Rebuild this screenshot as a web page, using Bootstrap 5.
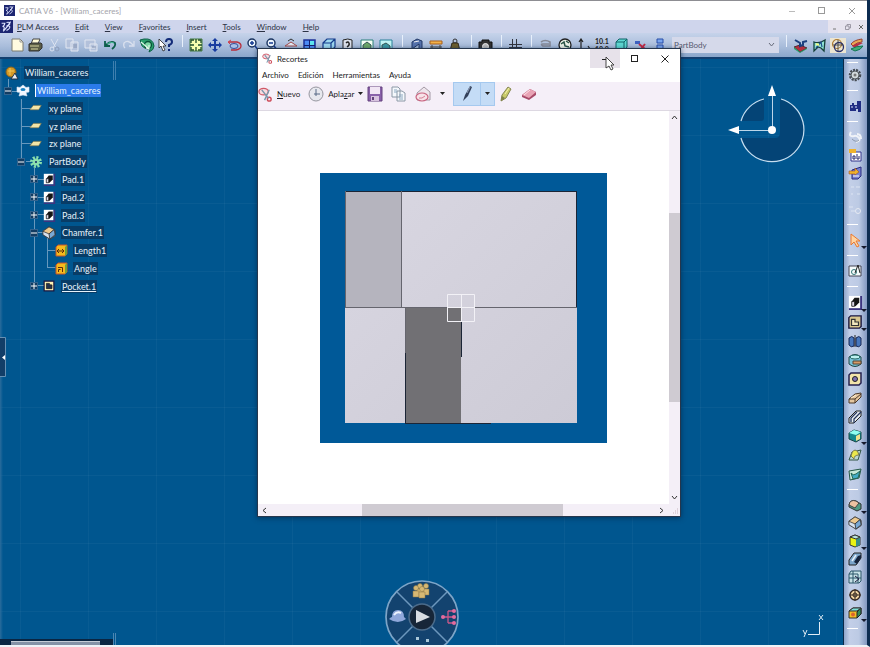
<!DOCTYPE html>
<html lang="en">
<head>
<meta charset="utf-8">
<meta name="viewport" content="width=device-width, initial-scale=1">
<title>CATIA V6 - [William_caceres]</title>
<link href="https://cdn.jsdelivr.net/npm/bootstrap@5.3.0/dist/css/bootstrap.min.css" rel="stylesheet">
<style>
body{font:8px/12px Lato,"Open Sans",sans-serif;color:#2c3345;background:#fff;height:100vh;overflow:hidden}
svg{display:block;flex:none}
button{background:none;border:0;padding:0;color:inherit;font:inherit}
button:hover{background:#ffffff55}
.app{height:100vh;border-right:3px solid #0d2c50;border-bottom:2px solid #eef3f8}
.titlebar{height:20px;border-top:1px solid #8d8d92;background:#fff;color:#a3a3aa}
.titlebar .sys{width:30px}
.menus{height:13px;background:#cfd5ec}
.menus a,.snip-menu a{color:inherit;text-decoration:none}
.menus nav{gap:16px}
.mdi{width:39px;background:#e6e3ee}
.tools{height:26px;background:linear-gradient(#c6d3ea,#a9bddb 55%,#8aa6cb);border-bottom:2px solid #123f70}
.tools button{flex:1 1 0;height:20px;display:flex;align-items:center;justify-content:center}
.g9{width:167px}.g11{width:208px}.g3{width:57px}.g1{width:18px}.g7{width:133px}.g4{width:75px}
.split{width:12px;height:12px;border-left:1px solid #e8f0fb;margin-left:7px;margin-right:-7px;align-self:flex-start;margin-top:2px}
.body-pick{width:107px;height:16px;margin-left:3px;border:0;border-radius:0;background:#d5d9ea;color:#555a70;font-size:8px;line-height:16px;padding:0 0 0 2px;appearance:none}
.pick{position:relative}
.pick svg{position:absolute;right:4px;top:5px;pointer-events:none}
.view{position:relative;overflow:hidden;background-color:#00568f;background-image:linear-gradient(90deg,#2a6c9c 0,#00568f00 3px),repeating-linear-gradient(90deg,#ffffff00 0 20px,#ffffff09 20px 21px,#ffffff00 21px 68px),repeating-linear-gradient(#ffffff00 0 8px,#ffffff09 8px 9px,#ffffff00 9px 68px)}
.tree{height:231px;width:115px;margin-top:5px;position:relative;font-size:9px;color:#e6f2fb}
.tree li{flex:1 1 0;display:flex;align-items:center;position:relative}
.tree .tag{background:#083c66;padding:0 1px;height:13px;line-height:13px;margin-left:-1px}
.tree .picked{background:#2b7bea;border-left:1px solid #fff}
.tree .exp{width:8px;height:8px;background:#123c62;border:1px solid #32638e;margin-right:4px;display:grid;place-items:center}
.tree .pic{width:14px;margin-right:6px;display:grid;place-items:center}
.l0{padding-left:5px}.l1{padding-left:4px}.l2{padding-left:17px}.l3{padding-left:30px}.l4{padding-left:42px}
.noexp{margin-left:12px}
.corner{position:absolute}
.compass{right:36px;top:24px}
.wheel{left:50%;bottom:0;margin-left:-38px}
.axes{right:19px;bottom:7px}
.flap{left:0;top:278px}
.dock{left:0;bottom:0}
.rule-top{left:113px;top:2px;width:3px;height:19px;border:1px solid #3f7fae;border-width:0 1px}
.side{width:24px;background:linear-gradient(90deg,#8ea5ca,#c3cfe8 25%,#bccae4 65%,#8298c0);border-left:1px solid #0b2948}
.side button{height:18px;width:24px;padding-right:2px;display:flex;align-items:center;justify-content:center;flex:none;position:relative}
.side .tall button{height:19px}
.side hr{margin:6px 0 6px 3px;width:11px;border:0;height:1px;background:#fff;opacity:1;flex:none}
.side hr.first{margin:3px 0 3px 3px}
.side .more::after{content:"";position:absolute;right:1px;bottom:0;border:3px solid transparent;border-top-color:#15192c;border-bottom:0}
.snip{position:absolute;left:257px;top:48px;width:424px;height:469px;background:#fff;border:1px solid #26364c;box-shadow:0 1px 5px #001c3899;color:#1b1b24}
.snip-title{height:19px;flex:none}
.snip-title button{width:30px;display:grid;place-items:center}
.snip-title .hot{background:#e7e2ea}
.snip-menu{height:14px;gap:9px;flex:none}
.snip-tools{height:29px;padding-bottom:4px;background:#f5eff8;border-bottom:1px solid #ddd8e2;flex:none}
.snip-tools button{height:24px;display:flex;align-items:center}
.pen{background:#c4dcf6;border:1px solid #a5c9ef}
.pen span{border-left:1px solid #a5c9ef}
.bar{background:#f4eff7}
.vbar{width:11px}.hbar{height:12px}
.thumb{background:#cfcbd2}
.vbar .thumb{height:189px;margin-top:89px}
.hbar .thumb{width:201px;margin-left:95px}
.pointer{position:absolute;left:605px;top:56px}
</style>
<script src="https://cdn.jsdelivr.net/npm/bootstrap@5.3.0/dist/js/bootstrap.bundle.min.js"></script>
</head>
<body>
<svg width="0" height="0" class="position-absolute" aria-hidden="true">
<symbol id="logo" viewBox="0 0 16 16"><rect width="16" height="16" fill="#1d2671"/><path d="M2 4h4q-1 4-3 4 4 0 1 5M8 3q5-1 4 2l-3 2q5 0 2 4l-3 2M4 14q5-5 9-12" fill="none" stroke="#dfe5ff" stroke-width="1.300"/></symbol>
<symbol id="pad" viewBox="0 0 16 16"><path d="M1 1h12v13H1z" fill="#fff"/><path d="M14 1v14H1" fill="none" stroke="#3d347f" stroke-width="2"/><path d="M4 7l3-4h5v5l-4 4H4z" fill="#151515"/><path d="M4 7h3v5H4z" fill="#ded9e8" stroke="#151515" stroke-width=".8"/></symbol>
<symbol id="pocket" viewBox="0 0 16 16"><path d="M1.500 1.500h13v13h-13z" fill="#fff3b5" stroke="#191640" stroke-width="1.600"/><path d="M4.500 4.500h4l1 2h2.500v5h-7.500z" fill="#24324d" stroke="#222"/></symbol>
<symbol id="pocket2" viewBox="0 0 16 16"><path d="M1 3l2-2h12v12l-2 2H1z" fill="#d9c890" stroke="#191640" stroke-width="1.600"/><path d="M4 5h4v3h4v4H4z" fill="#f2e8bd" stroke="#333" stroke-width="1.400"/></symbol>
<symbol id="chamfer" viewBox="0 0 16 16"><path d="M1 6l7-5 7 4v6l-6 4-8-5z" fill="#d5e1ee" stroke="#333"/><path d="M1 6l7-5 6 3-6 5z" fill="#edc98d" stroke="#444"/><path d="M8 9l6-5 1 6-6 5z" fill="#79a9d5" stroke="#333"/></symbol>
<symbol id="scissors" viewBox="0 0 16 16"><ellipse cx="6" cy="5" rx="5" ry="3.500" fill="#f7dbe0" stroke="#d05766" stroke-width="1.300"/><circle cx="12" cy="13" r="2" fill="none" stroke="#ce4c5a" stroke-width="1.500"/><path d="M4 3l7 9M12 3L7 14" stroke="#7896ab" stroke-width="1.500"/></symbol>
<symbol id="plane" viewBox="0 0 16 16"><path d="M5 5h9l-3 5H1z" fill="#f3e5a7" stroke="#8a7a46" stroke-width=".7"/></symbol>
</svg>
<div class="app d-flex flex-column">
<header class="titlebar d-flex align-items-center flex-shrink-0">
 <svg class="ms-1 me-1" width="11" height="11"><use href="#logo"/></svg><span class="ps-0">CATIA V6 - [William_caceres]</span>
 <div class="ms-auto d-flex">
 <button class="sys" aria-label="Minimize"><svg class="mx-auto" width="8" height="8"><path d="M1 4.500h6" stroke="#bbb"/></svg></button>
 <button class="sys" aria-label="Maximize"><svg class="mx-auto" width="8" height="8"><rect x=".5" y=".5" width="6" height="6" fill="none" stroke="#999"/></svg></button>
 <button class="sys" aria-label="Close"><svg class="mx-auto" width="8" height="8"><path d="M1 1l6 6M7 1l-6 6" stroke="#999"/></svg></button></div>
</header>
<div class="menus d-flex align-items-stretch flex-shrink-0">
 <svg width="13" height="13"><use href="#logo"/></svg>
 <nav class="d-flex align-items-center ms-1" aria-label="Main menu"><a href="#"><u>P</u>LM Access</a><a href="#"><u>E</u>dit</a><a href="#"><u>V</u>iew</a><a href="#"><u>F</u>avorites</a><a href="#"><u>I</u>nsert</a><a href="#"><u>T</u>ools</a><a href="#"><u>W</u>indow</a><a href="#"><u>H</u>elp</a></nav>
 <div class="mdi ms-auto d-flex align-items-center justify-content-around">
 <button aria-label="Minimize document"><svg width="6" height="6"><path d="M1 5h3" stroke="#777"/></svg></button><button aria-label="Restore document"><svg width="6" height="6"><path d="M2 2V.5h3.500V4H4M.5 2h3.500v3.500H.5z" fill="none" stroke="#8b8995" stroke-width=".8"/></svg></button><button aria-label="Close document"><svg width="6" height="6"><path d="M1 1l4 4M5 1L1 5" stroke="#666"/></svg></button></div>
</div>
<div class="tools d-flex align-items-center flex-shrink-0 ps-2" role="toolbar" aria-label="Standard">
 <div class="g9 d-flex">
 <button aria-label="New"><svg width="13" height="14" viewBox="0 0 13 14"><path d="M1 1h8l3 3v9H1z" fill="#fffbe0" stroke="#7b7b70"/><path d="M9 1v3h3" fill="none" stroke="#999"/></svg></button>
 <button aria-label="Print"><svg width="15" height="14" viewBox="0 0 15 14"><path d="M5 1h7l-2 5H3z" fill="#fffbd8" stroke="#444"/><path d="M1 6l3-1h9l1 1v4l-3 3H1z" fill="#5b5d46" stroke="#333"/><path d="M2 8h9M3 11h7" stroke="#d8d6a0"/></svg></button>
 <button aria-label="Cut"><svg width="13" height="14" viewBox="0 0 13 14"><path d="M3 1l5 9M10 1L5 10" stroke="#dce3f0"/><circle cx="4" cy="11" r="2" fill="none" stroke="#dce3f0"/><circle cx="9" cy="11" r="2" fill="none" stroke="#8a9ab8"/></svg></button>
 <button aria-label="Copy"><svg width="15" height="14" viewBox="0 0 15 14"><path d="M1 1h7v9H1zM6 4h7v9H6z" fill="#b3c1db" stroke="#e2e7f1"/><path d="M8 7h4M8 9h4" stroke="#8292b0"/></svg></button>
 <button aria-label="Paste"><svg width="15" height="14" viewBox="0 0 15 14"><path d="M1 2h10v8H1zM6 6h7v7H6z" fill="#b3c1db" stroke="#e2e7f1"/><path d="M8 9h4" stroke="#8292b0"/></svg></button>
 <button aria-label="Undo"><svg width="15" height="14" viewBox="0 0 15 14"><path d="M2 3v5h5M3 7q5-5 9-2 1 3-3 6" fill="none" stroke="#0d5f4a" stroke-width="1.800"/><path d="M4 6q4-3 7-1" fill="none" stroke="#59d4ab" stroke-width=".8"/></svg></button>
 <button aria-label="Redo"><svg width="15" height="14" viewBox="0 0 15 14"><path d="M13 3v5H8M12 7Q7 1 3 5 2 8 4 10" fill="none" stroke="#d9e0ee" stroke-width="1.300"/></svg></button>
 <button aria-label="Update"><svg width="16" height="15" viewBox="0 0 16 15"><path d="M1 2l4-1q9-1 10 7 0 4-5 6l1-3q-8 0-9-6z" fill="#2aa06c" stroke="#0b5f46"/><circle cx="9" cy="7" r="3.500" fill="#7fd8a6" stroke="#075339" stroke-width="1.300"/><path d="M2 4l8 7M7 10l3 1V7" fill="none" stroke="#e2fae8" stroke-width="1.100"/></svg></button>
 <button aria-label="What's this"><svg width="15" height="14" viewBox="0 0 15 14"><path d="M1 1v9l2-2 2 5 2-1-2-4h3z" fill="#fff" stroke="#222" stroke-width=".8"/><path d="M8 4q0-3 3-3t3 3q0 2-3 3v2M11 11v2" fill="none" stroke="#122b78" stroke-width="2"/></svg></button>
 </div><i class="split"></i>
 <div class="g11 d-flex">
 <button aria-label="Fit all"><svg width="14" height="14" viewBox="0 0 14 14"><path d="M1 1h12v12H1z" fill="#f5ffb0" stroke="#427b46"/><path d="M2 5V2h3M9 2h3v3M2 9v3h3M9 12h3V9M7 1v4M7 9v4M1 7h4M9 7h4" fill="none" stroke="#1c4e2b" stroke-width="1.300"/></svg></button>
 <button aria-label="Pan"><svg width="14" height="14" viewBox="0 0 14 14"><path d="M7 0l3 3H8v3h3V4l3 3-3 3V8H8v3h2l-3 3-3-3h2V8H3v2L0 7l3-3v2h3V3H4z" fill="#173ba0"/></svg></button>
 <button aria-label="Rotate"><svg width="15" height="14" viewBox="0 0 15 14"><path d="M2 4h8q4 1 4 4t-5 4H4" fill="none" stroke="#b82e3b" stroke-width="1.300"/><path d="M4 2L1 4l3 3" fill="none" stroke="#d2404b"/><ellipse cx="7" cy="8" rx="4" ry="2.500" fill="#a9c0e8" stroke="#364e9a"/></svg></button>
 <button aria-label="Zoom in"><svg width="14" height="14" viewBox="0 0 14 14"><circle cx="6" cy="5" r="4" fill="#eef7ff" stroke="#19335f" stroke-width="1.400"/><path d="M4 5h4M6 3v4M9 8l4 5" stroke="#163b91" stroke-width="1.500"/></svg></button>
 <button aria-label="Zoom out"><svg width="14" height="14" viewBox="0 0 14 14"><circle cx="6" cy="5" r="4" fill="#eef7ff" stroke="#19335f" stroke-width="1.400"/><path d="M4 5h4M9 8l4 5" stroke="#163b91" stroke-width="1.500"/></svg></button>
 <button aria-label="Normal view"><svg width="14" height="14" viewBox="0 0 14 14"><path d="M1 8l6-4 6 4z" fill="#e2ecf7" stroke="#a34d4d"/><path d="M4 3l3-2 3 2" fill="none" stroke="#333"/></svg></button>
 <button aria-label="Multi-view"><svg width="13" height="13" viewBox="0 0 13 13"><path d="M1 1h11v11H1z" fill="#4d8cf5" stroke="#1d3198" stroke-width="1.500"/><path d="M7 2h4v4H7z" fill="#5ee7ef"/><path d="M6.500 1v11M1 6.500h11" stroke="#162070"/></svg></button>
 <button aria-label="Isometric view"><svg width="14" height="14" viewBox="0 0 14 14"><path d="M1 5l4-4h8v8l-4 4H1zM1 5h8v8M9 5l4-4" fill="#9dd8ef" stroke="#153b8b" stroke-width="1.200"/></svg></button>
 <button aria-label="View mode"><svg width="12" height="14" viewBox="0 0 12 14"><path d="M1 2q5-2 9 0v11H1z" fill="#dce1ec" stroke="#222"/><path d="M4 5q2-2 3 0t-2 4" fill="none" stroke="#222" stroke-width="1.400"/></svg></button>
 <button aria-label="Hide or show"><svg width="14" height="13" viewBox="0 0 14 13"><path d="M1 1h12v11H1z" fill="#f5fff5" stroke="#2b8179"/><path d="M3 6l4-3 4 3v4H3z" fill="#6ca868" stroke="#355"/></svg></button>
 <button aria-label="Swap space"><svg width="14" height="13" viewBox="0 0 14 13"><path d="M1 1h12v11H1z" fill="#bff4f4" stroke="#2b8199"/><path d="M3 6l4-2 4 3v4H3z" fill="#3c9aa5" stroke="#355"/></svg></button>
 </div><i class="split"></i>
 <div class="g3 d-flex">
 <button aria-label="Catalog"><svg width="14" height="14" viewBox="0 0 14 14"><path d="M2 4l5-3 5 2v8H9V6l-7 5z" fill="#5572ac" stroke="#223866"/><path d="M4 4l5-1" stroke="#eee"/></svg></button>
 <button aria-label="Measure"><svg width="14" height="14" viewBox="0 0 14 14"><path d="M1 3h12v3H1z" fill="#f4b34b" stroke="#a7611e"/><path d="M1 9h12M3 7v4M11 7v4" stroke="#444"/></svg></button>
 <button aria-label="Inertia"><svg width="12" height="14" viewBox="0 0 12 14"><circle cx="6" cy="3" r="2" fill="none" stroke="#333"/><path d="M3 5h6l2 8H1z" fill="#6e602f" stroke="#302b20"/></svg></button>
 </div><i class="split"></i><div class="g1 d-flex"><button aria-label="Capture"><svg width="15" height="13" viewBox="0 0 15 13"><path d="M1 3h3V1h7v2h3v9H1z" fill="#333" stroke="#111"/><circle cx="7.500" cy="7.500" r="3" fill="#bbb" stroke="#eee"/></svg></button></div>
 <i class="split"></i><div class="g1 d-flex"><button aria-label="Work grid"><svg width="14" height="14" viewBox="0 0 14 14"><path d="M4.500 1v12M8.500 1v12M1 6.500h13M1 9.500h13" stroke="#33363f"/></svg></button></div><i class="split"></i>
 <div class="g7 d-flex">
 <button aria-label="Link"><svg width="13" height="14" viewBox="0 0 13 14"><path d="M2 4q4-3 9 0v4H4q-3-2 0-2h6" fill="none" stroke="#858997" stroke-width="1.600"/></svg></button>
 <button aria-label="Clock"><svg width="14" height="14" viewBox="0 0 14 14"><circle cx="7" cy="7" r="6" fill="#edf3e9" stroke="#222" stroke-width="1.300"/><path d="M3 6l3-2 1 4 4 1M8 3l3 2" stroke="#285246" stroke-width="1.500" fill="none"/></svg></button>
 <button aria-label="Axis system"><svg width="14" height="14" viewBox="0 0 14 14"><path d="M4 1v10h9M2 4l2-3 2 3M11 8l2 3" fill="none" stroke="#222" stroke-width="1.200"/></svg></button>
 <button aria-label="Mean dimensions"><svg width="15" height="14" viewBox="0 0 15 14"><text x="0" y="6" font-size="7" font-weight="bold" fill="#222">10.1</text><text x="0" y="14" font-size="7" font-weight="bold" fill="#222">10.0</text></svg></button>
 <button aria-label="Solid"><svg width="13" height="14" viewBox="0 0 13 14"><path d="M1 4l3-3h8v8l-3 4H1zM1 4h8v9M9 4l3-3" fill="#5ed8d3" stroke="#116569"/></svg></button>
 <button aria-label="Constraints"><svg width="14" height="14" viewBox="0 0 14 14"><path d="M1 3h5v3H1z" fill="#3e61c0"/><path d="M5 6l6 5M11 6l-4 5" stroke="#c32944" stroke-width="2"/></svg></button>
 <button aria-label="List"><svg width="12" height="14" viewBox="0 0 12 14"><path d="M3 1h6v4H3zM3 7h6v4H3z" fill="#78a4ed" stroke="#284ea8"/></svg></button>
 </div>
 <div class="pick"><label class="visually-hidden" for="body">Active body</label><select id="body" class="body-pick d-block"><option>PartBody</option></select><svg width="7" height="6"><path d="M1 1l2.500 3L6 1" fill="none" stroke="#666b7a"/></svg></div>
 <i class="split"></i>
 <div class="g4 d-flex">
 <button aria-label="Sketch tools"><svg width="15" height="15" viewBox="0 0 15 15"><path d="M1 9l6-2 7 3-7 4z" fill="#b42e3f" stroke="#552a33"/><path d="M1 9v2l6 4 7-4v-1l-7 4z" fill="#28a06b"/><path d="M2 2l5 3v3l3-1V4l4-1" fill="none" stroke="#1c3f7e" stroke-width="2"/></svg></button>
 <button aria-label="Surface"><svg width="15" height="15" viewBox="0 0 15 15"><path d="M2 4q5 2 11-2l-1 11-3-3-3-1-4 4z" fill="#8fe3d5" stroke="#14403a" stroke-width="1.300"/><path d="M4 10l5-6 1 5" fill="none" stroke="#194a8a" stroke-width="1.200"/><path d="M4 6l3 1" stroke="#f2ff87" stroke-width="2"/></svg></button>
 <button aria-label="Assembly"><svg width="16" height="15" viewBox="0 0 16 15"><path d="M0 0h16v15H0z" fill="#ece5d1"/><circle cx="7" cy="6" r="4.500" fill="none" stroke="#ae7c32" stroke-width="1.200"/><circle cx="9" cy="9" r="4.500" fill="none" stroke="#28306c" stroke-width="1.300"/><path d="M3 7h10M8 2v11" stroke="#333" stroke-width=".8"/></svg></button>
 <button aria-label="Layers"><svg width="14" height="15" viewBox="0 0 14 15"><path d="M1 6q3-4 11-5v3q-5 0-9 4z" fill="#eaa653" stroke="#943"/><path d="M2 8q5-4 11-3-5 2-8 5z" fill="#b72e42"/><path d="M1 11q5-3 12-3-2 4-8 5z" fill="#43ac77" stroke="#175"/></svg></button>
 </div>
</div>
<main class="d-flex flex-grow-1 overflow-hidden">
<section class="view flex-grow-1" aria-label="3D view">
 <svg class="corner mt-1" width="115" height="231" aria-hidden="true"><path d="M8.500 16v12M21.500 36v62M21.500 45.500h10M21.500 63.500h10M21.500 80.500h10M12 28.500h8M26 98.500h5M34.500 105v118M38 116.500h6M38 134.500h6M38 151.500h6M38 169.500h6M47.500 175v30M47.500 187.500h8M47.500 204.500h8M38 222.500h6" fill="none" stroke="#6798bd"/></svg>
 <ul class="tree d-flex flex-column list-unstyled mb-0">
 <li class="l0"><span class="pic"><svg width="14" height="14" viewBox="0 0 14 14"><circle cx="6" cy="6" r="5" fill="#d59a26" stroke="#87601b"/><path d="M3 5h6M5 2v7" stroke="#f1c759"/><path d="M6 13l4-6 3 6z" fill="#e9eef5" stroke="#234"/></svg></span><span class="tag">William_caceres</span></li>
 <li class="l1"><span class="exp"><svg width="6" height="6"><path d="M0 3h6" stroke="#fff"/></svg></span><span class="pic"><svg width="14" height="14" viewBox="0 0 14 14"><path d="M1 3l3 .5L7 1l3 2.500L13 3v5l-3 .5 1 3.500-4-1-4 1 1-3.500L1 8z" fill="#f3f7ff" stroke="#dbe6f2" stroke-width=".6"/><ellipse cx="7" cy="5.500" rx="2.500" ry="1.500" fill="#1b83c1"/></svg></span><span class="tag picked">William_caceres</span></li>
 <li class="l2"><span class="pic noexp"><svg width="14" height="14"><use href="#plane"/></svg></span><span class="tag">xy plane</span></li>
 <li class="l2"><span class="pic noexp"><svg width="14" height="14"><use href="#plane"/></svg></span><span class="tag">yz plane</span></li>
 <li class="l2"><span class="pic noexp"><svg width="14" height="14"><use href="#plane"/></svg></span><span class="tag">zx plane</span></li>
 <li class="l2"><span class="exp"><svg width="6" height="6"><path d="M0 3h6" stroke="#fff"/></svg></span><span class="pic"><svg width="14" height="14" viewBox="0 0 14 14"><circle cx="7" cy="7" r="4.500" fill="none" stroke="#8be0ae" stroke-width="3" stroke-dasharray="2 1.500"/><circle cx="7" cy="7" r="3.500" fill="#8be0ae"/><circle cx="7" cy="7" r="1" fill="#126"/></svg></span><span class="tag">PartBody</span></li>
 <li class="l3"><span class="exp"><svg width="6" height="6"><path d="M0 3h6M3 0v6" stroke="#fff"/></svg></span><span class="pic"><svg width="13" height="13"><use href="#pad"/></svg></span><span class="tag">Pad.1</span></li>
 <li class="l3"><span class="exp"><svg width="6" height="6"><path d="M0 3h6M3 0v6" stroke="#fff"/></svg></span><span class="pic"><svg width="13" height="13"><use href="#pad"/></svg></span><span class="tag">Pad.2</span></li>
 <li class="l3"><span class="exp"><svg width="6" height="6"><path d="M0 3h6M3 0v6" stroke="#fff"/></svg></span><span class="pic"><svg width="13" height="13"><use href="#pad"/></svg></span><span class="tag">Pad.3</span></li>
 <li class="l3"><span class="exp"><svg width="6" height="6"><path d="M0 3h6" stroke="#fff"/></svg></span><span class="pic"><svg width="14" height="14"><use href="#chamfer"/></svg></span><span class="tag">Chamfer.1</span></li>
 <li class="l4"><span class="pic noexp"><svg width="13" height="13" viewBox="0 0 13 13"><path d="M1 3l2-2h9v9l-2 2H1z" fill="#f6b91d" stroke="#c4542b"/><path d="M12 1v9l-2 2V3z" fill="#70a43a"/><path d="M2 7h7M4 5L2 7l2 2M7 5l2 2-2 2" fill="none" stroke="#5b2b10"/></svg></span><span class="tag">Length1</span></li>
 <li class="l4"><span class="pic noexp"><svg width="13" height="13" viewBox="0 0 13 13"><path d="M1 3l2-2h9v9l-2 2H1z" fill="#f6b91d" stroke="#c4542b"/><path d="M12 1v9l-2 2V3z" fill="#70a43a"/><path d="M3 5.500h4.500V10M3.500 10V7.500h2" fill="none" stroke="#5b2b10"/></svg></span><span class="tag">Angle</span></li>
 <li class="l3"><span class="exp"><svg width="6" height="6"><path d="M0 3h6M3 0v6" stroke="#fff"/></svg></span><span class="pic"><svg width="12" height="12"><use href="#pocket"/></svg></span><span class="tag text-decoration-underline">Pocket.1</span></li>
 </ul>
 <div class="corner rule-top"></div>
 <svg class="corner flap" width="7" height="41"><path d="M0 .5h5.500v39H0" fill="#123e68" stroke="#6790b3"/><path d="M5 18v5l-3-2.500z" fill="#fff"/></svg>
 <svg class="corner dock" width="117" height="12"><path d="M0 6h113v6H0z" fill="#0a2542"/><path d="M11 8h89v4H11z" fill="#8492a6"/><path d="M11 8.500h89" stroke="#c4ccd6"/><path d="M113.500 0v12M115.500 0v12" stroke="#4c86b2"/></svg>
 <svg class="corner compass" width="80" height="82" viewBox="0 0 80 82"><path d="M54 16A32 32 0 1 1 14 55H48q5 0 5-6V16z" fill="#044476"/><path d="M14 38a32 32 0 0 1 23-22v19q0 3-3 3z" fill="#044476"/><path d="M14 38a32 32 0 0 1 23-22M54 16A32 32 0 1 1 14 55" fill="none" stroke="#c6def0" stroke-width="1.200"/><path d="M45.500 46V8M45 47.500H8" stroke="#bcd6e9"/><path d="M45 2l4 11h-8zM1 47l11-4v8z" fill="#fff"/><circle cx="45" cy="47" r="4" fill="#fff"/></svg>
 <svg class="corner wheel" width="76" height="66" viewBox="0 0 76 66"><circle cx="38" cy="38" r="36" fill="#13436f" stroke="#7da5c8" stroke-width="1.700"/><path d="M13 13l50 50M63 13L13 63" stroke="#6c97bd" stroke-width="1.500"/><circle cx="38" cy="38" r="13" fill="#172638" stroke="#4c6c8b" stroke-width="1.500"/><path d="M32 31l14 7-14 6z" fill="#d9dde2"/><g fill="#d6b873" stroke="#8a7444" stroke-width=".5"><circle cx="42" cy="7" r="2.500"/><path d="M39 10h6v6h-6z"/><circle cx="36" cy="7" r="2.500"/><path d="M33 10h6v6h-6z"/><circle cx="32" cy="9" r="2.500"/><path d="M29 12h6v6h-6z"/><circle cx="38" cy="10" r="2.500"/><path d="M35 13h6v6h-6z"/></g><path d="M5 40q2-2 3-2 0-7 6-7t6 7l2 2q-8 6-17 0z" fill="#8fa7da"/><path d="M10 36q3-4 7-2" fill="none" stroke="#edf4ff" stroke-width="2"/><path d="M59 38h11M64 32h6M64 44h6M64 32v12" stroke="#cc5889" stroke-width="1.300" fill="none"/><g fill="#e46b9d"><circle cx="59" cy="38" r="2"/><circle cx="70" cy="32" r="2"/><circle cx="70" cy="38" r="2"/><circle cx="70" cy="44" r="2"/></g><path d="M32 58h3v3h-3zM42 60h3v3h-3z" fill="#a9c7d9"/></svg>
 <svg class="corner axes" width="22" height="24" fill="none" stroke="#e1edf5"><path d="M17.500 8v12.500H6M17 1l4 5M21 1l-4 5M1 16l2 4M5 16l-3 7"/></svg>
</section>
<aside class="side d-flex flex-column flex-shrink-0" aria-label="Part design tools">
 <hr class="first">
 <button aria-label="Settings"><svg width="14" height="14" viewBox="0 0 14 14"><circle cx="7" cy="7" r="5" fill="none" stroke="#454b53" stroke-width="2.500" stroke-dasharray="2 1"/><circle cx="7" cy="7" r="4" fill="#d2d9dc" stroke="#50575c"/><circle cx="7" cy="7" r="1.500" fill="#777"/></svg></button><hr>
 <button aria-label="Search"><svg width="13" height="13" viewBox="0 0 13 13"><path d="M1 5h2V3h2v2h3V1h4v11H9V9H7v2H1z" fill="#202c83"/><path d="M2 7h2M6 7h2" stroke="#dbe3ff"/></svg></button><hr>
 <button aria-label="Rotate object"><svg width="14" height="14" viewBox="0 0 14 14"><path d="M3 2q-3 5 3 4 3-1 5 2t-3 4M9 4q4 0 4 5" fill="none" stroke="#f0f3f8" stroke-width="2"/><path d="M4 9q4 4 7 1" fill="none" stroke="#8c99ac"/></svg></button>
 <button aria-label="Rename"><svg width="14" height="14" viewBox="0 0 14 14"><path d="M3 4h10v9H3z" fill="#fff" stroke="#31328a"/><path d="M1 1h7v4H1z" fill="#efb32d"/><path d="M5 8h2v3H5zM9 6v5h2V8" fill="none" stroke="#23276e"/></svg></button>
 <button aria-label="Replace"><svg width="14" height="14" viewBox="0 0 14 14"><path d="M4 4l9-3v9l-3 3H4z" fill="#7780d1" stroke="#2b2b7c"/><path d="M1 5h6V2l4 4-4 3V8H1z" fill="#efb32d" stroke="#9b4e31" stroke-width=".6"/><path d="M5 10h6" stroke="#fff"/></svg></button>
 <button aria-label="Copy reference"><svg width="12" height="12"><path d="M2 2h3M7 2h4M2 9h2M8 9h3" stroke="#dce4f2"/></svg></button>
 <button aria-label="Break link"><svg width="14" height="12"><path d="M1 4h4M3 8h4" stroke="#dce4f2"/><circle cx="10" cy="8" r="2.500" fill="none" stroke="#e5e9f2"/></svg></button><hr>
 <button class="more" aria-label="Select"><svg width="13" height="15" viewBox="0 0 13 15"><path d="M2 1v11l3-3 3 5 2-1-3-5h4z" fill="#ffd4a1" stroke="#e97930"/></svg></button><hr>
 <button aria-label="Sketch"><svg width="14" height="14" viewBox="0 0 14 14"><path d="M1 2h12v10H1z" fill="#f5fbfb" stroke="#445"/><circle cx="6" cy="8" r="2.500" fill="none" stroke="#377"/><path d="M7 9l3-8 2 8" fill="none" stroke="#222"/></svg></button><hr>
 <div class="tall">
 <button class="more" aria-label="Pad"><svg width="15" height="15"><use href="#pad"/></svg></button>
 <button class="more" aria-label="Pocket"><svg width="14" height="14"><use href="#pocket2"/></svg></button>
 <button aria-label="Shaft"><svg width="14" height="14" viewBox="0 0 14 14"><path d="M1 4q3-3 5 0v8q-3 2-5-1zM8 4q3-3 5 0v7q-2 3-5 1z" fill="#4777bd" stroke="#172755"/><path d="M7 1v12" stroke="#222"/></svg></button>
 <button aria-label="Groove"><svg width="14" height="14" viewBox="0 0 14 14"><path d="M1 4q6-5 12 0v7q-6 5-12 0z" fill="#77c2d7" stroke="#244"/><ellipse cx="7" cy="4" rx="5" ry="2" fill="#bdf1f0" stroke="#266"/><path d="M5 8h8v3H5z" fill="#d89b68" stroke="#543"/></svg></button>
 <button aria-label="Hole"><svg width="14" height="14" viewBox="0 0 14 14"><path d="M1 3l2-2h10v10l-2 2H1z" fill="#f2e4aa" stroke="#242050" stroke-width="1.500"/><circle cx="7" cy="7" r="2.500" fill="#7e6fb1" stroke="#222"/></svg></button>
 <button aria-label="Rib"><svg width="14" height="14" viewBox="0 0 14 14"><path d="M1 8l6-5 6-1v4l-6 6H1z" fill="#e5c79f" stroke="#4b382b"/><path d="M1 8h6l6-5M7 8v4" fill="none" stroke="#4b382b"/><path d="M3 7l5-3" stroke="#fff0d6"/></svg></button>
 <button aria-label="Slot"><svg width="14" height="14" viewBox="0 0 14 14"><path d="M1 8l7-7h5v5l-7 7H1z" fill="#e8edf2" stroke="#222"/><path d="M3 12V8l6-6M6 13V9l7-7" fill="none" stroke="#26365e" stroke-width="1.300"/></svg></button>
 <button class="more" aria-label="Combine"><svg width="14" height="14" viewBox="0 0 14 14"><path d="M1 4l5-3 7 2v7l-5 3-7-3z" fill="#15898c" stroke="#154445"/><path d="M1 4l5-3 7 2-5 3z" fill="#8ffff0"/><path d="M8 7l4-2v5l-4 2z" fill="#eee18c"/></svg></button>
 <button aria-label="Close surface"><svg width="14" height="14" viewBox="0 0 14 14"><path d="M1 12l3-8 9-2-3 10z" fill="#b9d6cf" stroke="#354"/><path d="M3 8q1-6 4-6 3 0 4 5-5 0-5 4z" fill="#eae84b" stroke="#775"/></svg></button>
 <button aria-label="Sew surface"><svg width="14" height="14" viewBox="0 0 14 14"><path d="M1 4l12-2-2 9-9 2z" fill="#c8e9d9" stroke="#254"/><path d="M3 6q2 3 5 1l4-3-2 7-5 1z" fill="#42abc4" stroke="#265"/></svg></button>
 </div><hr>
 <button class="more" aria-label="Fillet"><svg width="14" height="14" viewBox="0 0 14 14"><path d="M1 7q1-6 7-4l5 3v5l-4 2-8-4z" fill="#4e9a83" stroke="#333"/><path d="M1 7q1-6 7-4l3 2-4 5z" fill="#ecc2a1" stroke="#444"/></svg></button>
 <button aria-label="Chamfer"><svg width="14" height="14"><use href="#chamfer"/></svg></button>
 <button class="more" aria-label="Draft"><svg width="14" height="14" viewBox="0 0 14 14"><path d="M2 3l5-2 5 2v8l-5 2-5-2z" fill="#eaf314" stroke="#333"/><path d="M8 5l4-2v8l-4 2z" fill="#398d88"/><path d="M2 3l5-2 5 2-4 2z" fill="#b9e4dc" stroke="#333"/></svg></button>
 <button aria-label="Shell"><svg width="14" height="14" viewBox="0 0 14 14"><path d="M1 8l5-7h7v5l-5 7H1z" fill="#7ba4ca" stroke="#222"/><path d="M6 10l4-6 3-1v3l-4 6z" fill="#15223b"/><path d="M4 9l4-6" stroke="#e5eff8" stroke-width="1.500"/></svg></button>
 <button aria-label="Thickness"><svg width="14" height="14" viewBox="0 0 14 14"><path d="M1 4l2-3h10v10l-2 2H1zM1 4h9v9M5 1v12M1 8h12" fill="#c7e1e6" stroke="#2a5568"/><path d="M7 6l4 3-4 3" fill="none" stroke="#224"/></svg></button>
 <button aria-label="Thread"><svg width="14" height="14" viewBox="0 0 14 14"><circle cx="7" cy="7" r="5" fill="#f2d4a1" stroke="#392c24" stroke-width="1.400"/><circle cx="7" cy="7" r="2" fill="none" stroke="#392c24"/><path d="M1 7h12M7 1v12" stroke="#392c24"/></svg></button>
 <button class="more" aria-label="Remove face"><svg width="14" height="14" viewBox="0 0 14 14"><path d="M1 5l4-3h8v6l-4 4H1z" fill="#f4bf25" stroke="#333"/><path d="M9 6l4-4v6l-4 4z" fill="#358b59" stroke="#222"/><circle cx="5" cy="8.500" r="2" fill="#dc642e"/><path d="M1 5l4-3h8L9 5z" fill="#7ee0d6" stroke="#333"/></svg></button><hr>
</aside>
</main>
</div>
<section class="snip d-flex flex-column" aria-label="Recortes">
 <div class="snip-title d-flex align-items-stretch"><svg class="ms-1 me-1 mt-1" width="11" height="11"><use href="#scissors"/></svg><span class="align-self-center">Recortes</span>
 <div class="ms-auto d-flex"><button class="hot" aria-label="Minimizar"><svg width="8" height="8"><path d="M1 4.500h6" stroke="#222"/></svg></button><button aria-label="Maximizar"><svg width="8" height="8"><rect x=".5" y=".5" width="6" height="6" fill="none" stroke="#222"/></svg></button><button aria-label="Cerrar"><svg width="8" height="8"><path d="M.5.5l7 7M7.500.5l-7 7" stroke="#222"/></svg></button></div></div>
 <nav class="snip-menu d-flex align-items-center ps-1" aria-label="Menú"><a href="#">Archivo</a><a href="#">Edición</a><a href="#">Herramientas</a><a href="#">Ayuda</a></nav>
 <div class="snip-tools d-flex align-items-center" role="toolbar" aria-label="Recortes">
 <button><svg class="me-1" width="15" height="17"><use href="#scissors"/></svg><span><u>N</u>uevo</span></button>
 <button class="ms-2"><svg width="16" height="16" viewBox="0 0 16 16"><circle cx="8" cy="8" r="7" fill="#e7e8ee" stroke="#96969f"/><path d="M8 3v5h4M8 8v2M6 8h2" fill="none" stroke="#596a86"/></svg><span class="ms-1">Apla<u>z</u>ar</span><svg class="ms-1" width="5" height="4"><path d="M0 0h5L2.500 3z" fill="#222"/></svg></button>
 <button class="ms-1" aria-label="Guardar recorte"><svg width="16" height="16" viewBox="0 0 16 16"><path d="M1 1h14v14H1z" fill="#8961a9" stroke="#65437f"/><path d="M3 1h10v7H3z" fill="#f1e6f4"/><path d="M4 10h8v5H4z" fill="#d8c3df"/><path d="M5 11h2v3H5z" fill="#614179"/></svg></button>
 <button class="ms-2" aria-label="Copiar"><svg width="15" height="16" viewBox="0 0 15 16"><path d="M1 1h6l2 2v8H1zM6 5h5l3 2v8H6z" fill="#f5f8fc" stroke="#8b98a6"/><path d="M3 4h3M3 6h3M8 9h4M8 11h4M8 13h4" stroke="#8ca8c0"/></svg></button>
 <button class="ms-2" aria-label="Enviar recorte"><svg class="me-2" width="18" height="17" viewBox="0 0 18 17"><path d="M3 7l7-6 6 5v8H3z" fill="#eee6ed" stroke="#a49aa5"/><ellipse cx="8" cy="11" rx="6" ry="4" fill="#f7e3e9" stroke="#c96480" stroke-width="1.200"/><path d="M5 12q3 1 6-2" stroke="#d58296" fill="none"/></svg><svg width="5" height="4"><path d="M0 0h5L2.500 3z" fill="#222"/></svg></button>
 <button class="pen ms-2" aria-label="Lápiz"><svg class="mx-1" width="18" height="20" viewBox="0 0 18 20"><path d="M5 17l2-6 5-9 2 1-4 9z" fill="#33405a"/><path d="M9 9l3-6" stroke="#8f9fb8"/></svg><span class="h-100 d-flex align-items-center px-1"><svg width="5" height="4"><path d="M0 0h5L2.500 3z" fill="#222"/></svg></span></button>
 <button class="ms-1" aria-label="Marcador"><svg width="14" height="18" viewBox="0 0 14 18"><path d="M2 16l1-6 6-8 3 2-5 9z" fill="#c9cb69" stroke="#858653"/><path d="M2 16l1-5 3 2z" fill="#7f8148"/><path d="M6 9l4-6" stroke="#f7f2af"/></svg></button>
 <button class="ms-2" aria-label="Borrador"><svg width="16" height="14" viewBox="0 0 16 14"><path d="M1 8l8-6 6 3v3l-7 5-7-3z" fill="#a84a69"/><path d="M1 8l8-6 6 3-7 6z" fill="#e8a3b5"/><path d="M3 8l6-5" stroke="#ffe0e5"/></svg></button>
 </div>
 <div class="d-flex flex-grow-1">
 <div class="flex-grow-1 d-flex align-items-center justify-content-center">
 <svg width="287" height="270" viewBox="0 0 287 270" role="img" aria-label="Part top view"><defs><linearGradient id="face" x2="1" y2="1"><stop stop-color="#d9d7e2"/><stop offset="1" stop-color="#cdcbd6"/></linearGradient></defs><path d="M0 0h287v270H0z" fill="#005998"/><path d="M25 18h232v232H25z" fill="url(#face)"/><path d="M25 18h56v116H25z" fill="#b5b4be"/><path d="M85 134h56v116H85z" fill="#717074"/><path d="M25 18.500h232M256.500 18v116M85.500 180v70M85 250.500h86M141.500 148v36" stroke="#1b2536" fill="none"/><path d="M81.500 18v116M25 134.500h232M25.500 18v116M85.500 134v46" stroke="#65656e" fill="none"/><path d="M127.500 121.500h27v27h-27zM141.500 121v27M128 134.500h27" fill="none" stroke="#f2f1f6"/></svg></div>
 <div class="vbar bar d-flex flex-column"><svg class="mx-auto mt-1" width="7" height="5"><path d="M1 4l2.500-3L6 4" fill="none" stroke="#333"/></svg><div class="thumb mt-auto"></div><svg class="mx-auto mt-auto mb-1" width="7" height="5"><path d="M1 1l2.500 3L6 1" fill="none" stroke="#333"/></svg></div></div>
 <div class="hbar bar d-flex align-items-center flex-shrink-0"><svg class="ms-1" width="5" height="7"><path d="M4 1L1 3.500 4 6" fill="none" stroke="#333"/></svg><div class="thumb h-100"></div><svg class="ms-auto me-1" width="5" height="7"><path d="M1 1l3 2.500L1 6" fill="none" stroke="#333"/></svg><svg class="ms-1" width="8" height="8"><path d="M1 7h1M3 5h1M3 7h1M5 3h1M5 5h1M5 7h1" stroke="#c8b4bd"/></svg></div>
</section>
<svg class="pointer" width="10" height="15" viewBox="0 0 10 15" aria-hidden="true"><path d="M1 1v11l3-2 2 4 2-1-2-4h3z" fill="#fff" stroke="#333" stroke-width=".9"/></svg>
</body>
</html>
